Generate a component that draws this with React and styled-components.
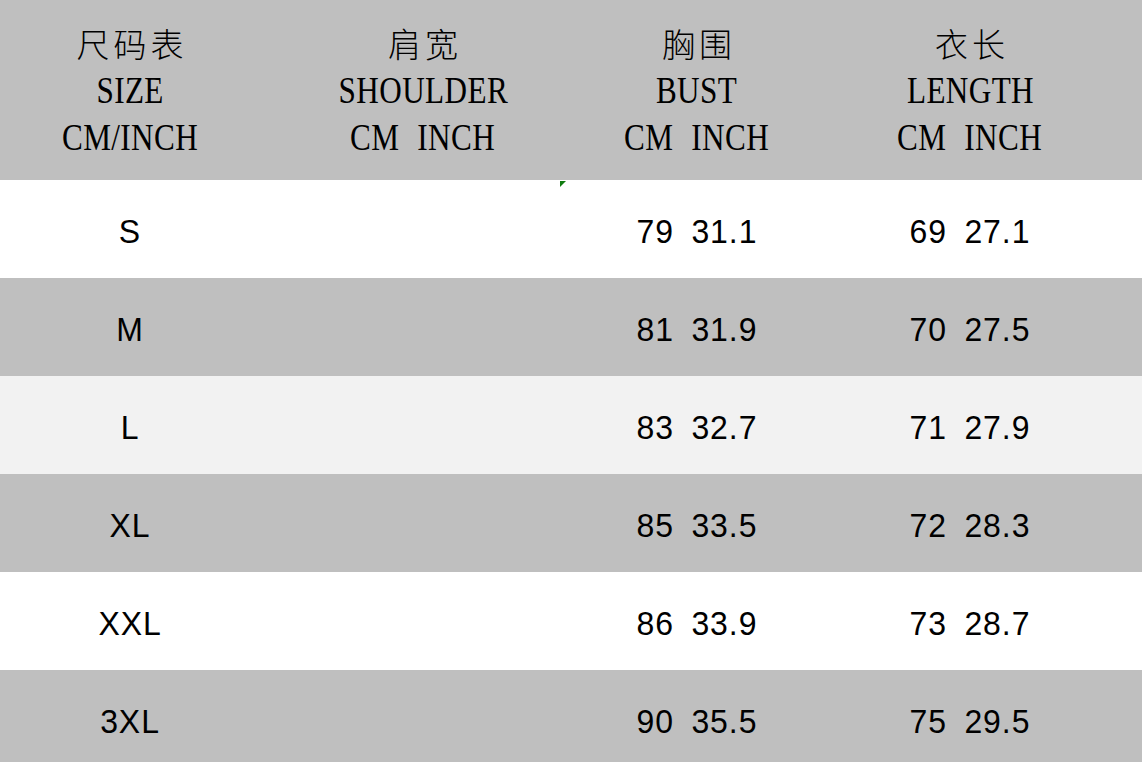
import styled, { createGlobalStyle } from "styled-components";

const GlobalStyle = createGlobalStyle`
  html, body {
    margin: 0;
    padding: 0;
    background: #ffffff;
  }
  body {
    width: 1142px;
    height: 762px;
    overflow: hidden;
  }
`;

const Table = styled.div`
  width: 1142px;
  display: flex;
  flex-direction: column;
`;

const Row = styled.div`
  position: relative;
  display: grid;
  grid-template-columns: 260px 326px 222px 324px;
  height: ${(props) => props.height || 98}px;
  background: ${(props) => props.bg};
`;

const HeadCell = styled.div`
  display: flex;
  flex-direction: column;
  align-items: center;
  justify-content: center;
  color: #000;
`;

const CnLine = styled.div`
  font-family: "Noto Sans CJK SC", sans-serif;
  font-weight: 300;
  font-size: 33px;
  letter-spacing: 4px;
  line-height: 47px;
  margin-right: -4px;
`;

const EnLine = styled.div`
  font-family: "Liberation Serif", serif;
  font-size: 38px;
  line-height: 47px;
  letter-spacing: 0.5px;
  word-spacing: 12px;
  white-space: pre;
  transform: scaleX(0.82);
`;

const Cell = styled.div`
  display: flex;
  align-items: center;
  justify-content: center;
  padding-top: 5px;
  font-family: "Liberation Sans", sans-serif;
  font-size: 34px;
  letter-spacing: 1px;
  word-spacing: 8px;
  color: #000;
  white-space: pre;
  transform: scaleX(0.94);
`;

const Marker = styled.div`
  position: absolute;
  left: 560px;
  top: 1px;
  width: 0;
  height: 0;
  border-top: 6px solid #107c10;
  border-right: 6px solid transparent;
`;

const headers = [
  ["尺码表", "SIZE", "CM/INCH"],
  ["肩宽", "SHOULDER", "CM INCH"],
  ["胸围", "BUST", "CM INCH"],
  ["衣长", "LENGTH", "CM INCH"],
];

const rows = [
  { size: "S", bust: "79 31.1", length: "69 27.1", bg: "#ffffff" },
  { size: "M", bust: "81 31.9", length: "70 27.5", bg: "#bfbfbf" },
  { size: "L", bust: "83 32.7", length: "71 27.9", bg: "#f2f2f2" },
  { size: "XL", bust: "85 33.5", length: "72 28.3", bg: "#bfbfbf" },
  { size: "XXL", bust: "86 33.9", length: "73 28.7", bg: "#ffffff" },
  { size: "3XL", bust: "90 35.5", length: "75 29.5", bg: "#bfbfbf" },
];

const App = () => {
  return (
    <>
      <GlobalStyle />
      <Table>
        <Row height={180} bg="#bfbfbf">
          {headers.map((h) => (
            <HeadCell key={h[1]}>
              <CnLine>{h[0]}</CnLine>
              <EnLine>{h[1]}</EnLine>
              <EnLine>{h[2]}</EnLine>
            </HeadCell>
          ))}
        </Row>
        {rows.map((r, i) => (
          <Row key={r.size} bg={r.bg}>
            {i === 0 && <Marker />}
            <Cell>{r.size}</Cell>
            <Cell></Cell>
            <Cell>{r.bust}</Cell>
            <Cell>{r.length}</Cell>
          </Row>
        ))}
      </Table>
    </>
  );
};

export default App;
